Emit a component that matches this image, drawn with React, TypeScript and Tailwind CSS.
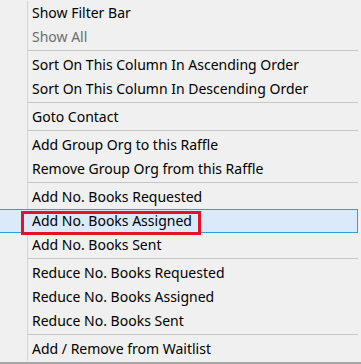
import React from 'react';

type Entry =
    | { kind: 'item'; label: string; disabled?: boolean; active?: boolean }
    | { kind: 'sep' };

const entries: Entry[] = [
    { kind: 'item', label: 'Show Filter Bar' },
    { kind: 'item', label: 'Show All', disabled: true },
    { kind: 'sep' },
    { kind: 'item', label: 'Sort On This Column In Ascending Order' },
    { kind: 'item', label: 'Sort On This Column In Descending Order' },
    { kind: 'sep' },
    { kind: 'item', label: 'Goto Contact' },
    { kind: 'sep' },
    { kind: 'item', label: 'Add Group Org to this Raffle' },
    { kind: 'item', label: 'Remove Group Org from this Raffle' },
    { kind: 'sep' },
    { kind: 'item', label: 'Add No. Books Requested' },
    { kind: 'item', label: 'Add No. Books Assigned', active: true },
    { kind: 'item', label: 'Add No. Books Sent' },
    { kind: 'sep' },
    { kind: 'item', label: 'Reduce No. Books Requested' },
    { kind: 'item', label: 'Reduce No. Books Assigned' },
    { kind: 'item', label: 'Reduce No. Books Sent' },
    { kind: 'sep' },
    { kind: 'item', label: 'Add / Remove from Waitlist' },
];

export default function App() {
    return (
        <div
            className="w-[361px] h-[364px] bg-[#f0f0f0] overflow-hidden flex flex-col"
            style={{ fontFamily: '"Noto Sans", "Open Sans", sans-serif' }}
        >
            <div className="pt-[1px] pr-[3px] flex flex-col">
                {entries.map((e, i) => {
                    if (e.kind === 'sep') {
                        return (
                            <div key={i} className="h-[4px] flex">
                                <div className="w-[28px] shrink-0 border-r border-[#d4d4d4]" />
                                <div className="flex-1 pt-[1px]">
                                    <div className="h-px bg-[#c6c6c6]" />
                                </div>
                            </div>
                        );
                    }
                    if (e.active) {
                        return (
                            <div key={i} className="relative h-[24px] flex items-center bg-[#dbeafb] border-y border-r border-[#2c9ed8]">
                                <span className="pl-[32px] text-[14px] text-black leading-none whitespace-nowrap">{e.label}</span>
                                {/* annotation box */}
                                <div className="absolute left-[21px] top-[1px] w-[180px] h-[24px] border-[3px] border-[#e81123]" />
                            </div>
                        );
                    }
                    return (
                        <div key={i} className="h-[24px] flex">
                            <div className="w-[28px] shrink-0 border-r border-[#d4d4d4]" />
                            <div
                                className={`flex items-center pl-[4px] text-[14px] leading-none whitespace-nowrap ${
                                    e.disabled ? 'text-[#6d6d6d]' : 'text-black'
                                }`}
                            >
                                {e.label}
                            </div>
                        </div>
                    );
                })}
            </div>
            <div className="flex-1" />
            <div className="h-[2px] bg-[#a6a6a6]" />
        </div>
    );
}
